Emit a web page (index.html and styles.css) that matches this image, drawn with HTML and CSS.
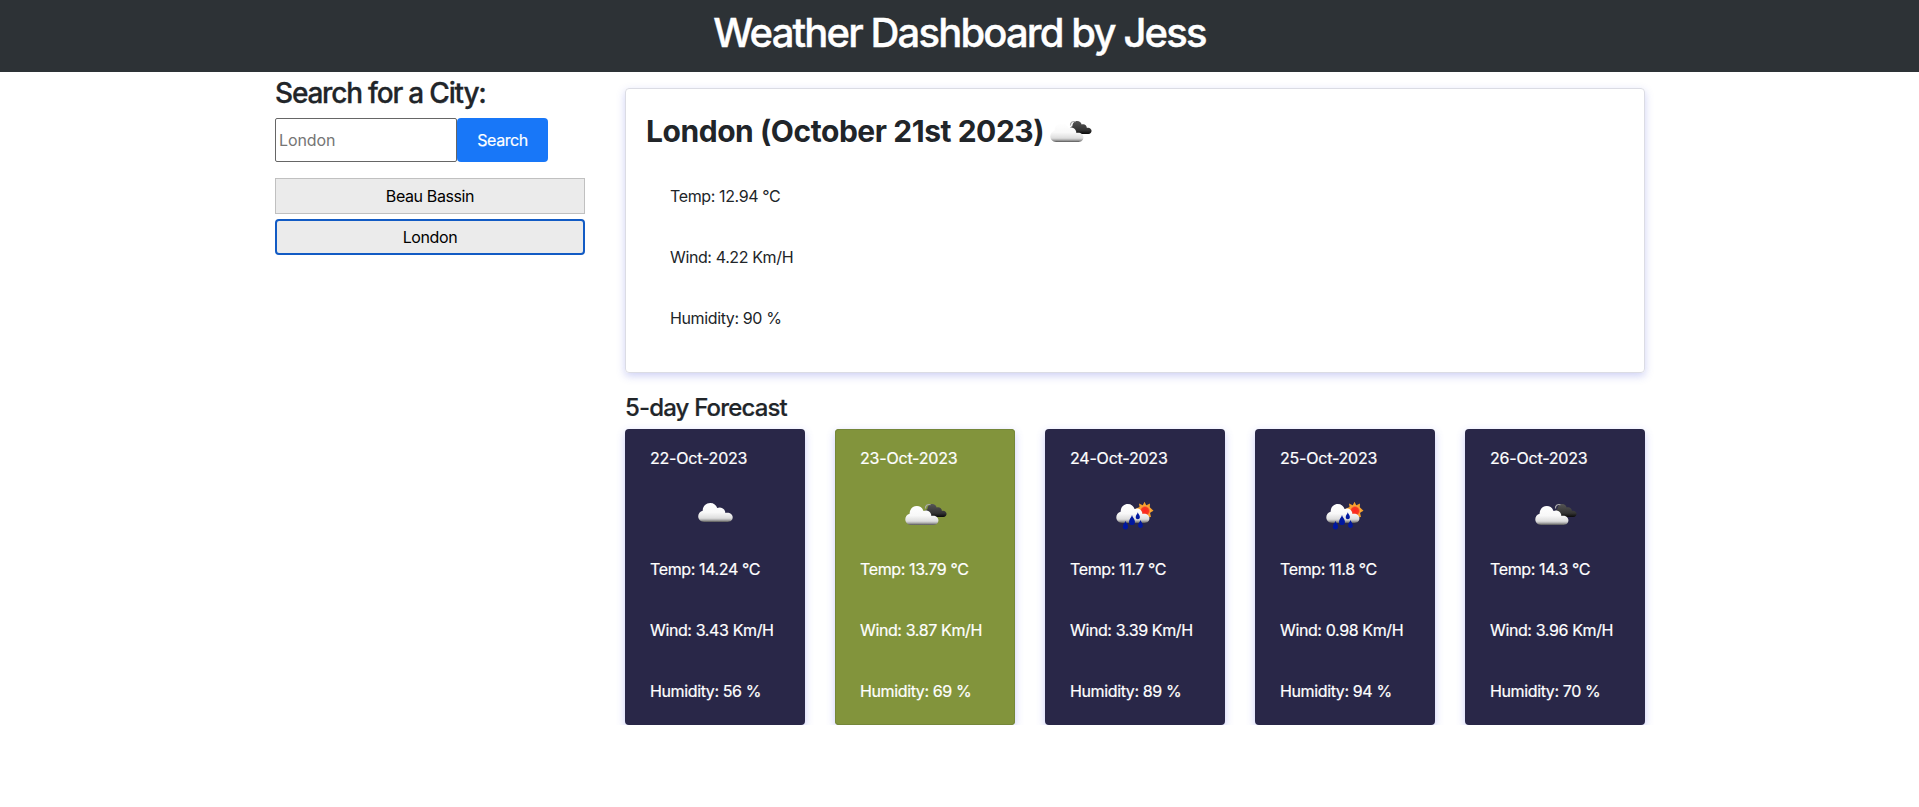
FILE: index.html
```html
<!DOCTYPE html>
<html lang="en">
<head>
<meta charset="utf-8">
<title>Weather Dashboard</title>
<link rel="stylesheet" href="styles.css">
</head>
<body>
<svg class="defs" width="0" height="0" aria-hidden="true">
  <defs>
    <linearGradient id="light" x1="0" y1="0" x2="0" y2="1">
      <stop offset="0" stop-color="#fff"/><stop offset=".5" stop-color="#f8f8f8"/><stop offset=".8" stop-color="#ddd"/><stop offset=".9" stop-color="#aaa"/><stop offset="1" stop-color="#555"/>
    </linearGradient>
    <linearGradient id="dark" x1="0" y1="0" x2="0" y2="1">
      <stop offset="0" stop-color="#555"/><stop offset=".7" stop-color="#333"/><stop offset="1" stop-color="#080808"/>
    </linearGradient>
    <radialGradient id="sun">
      <stop offset="0" stop-color="#f22"/><stop offset=".65" stop-color="#f53a20"/><stop offset="1" stop-color="#ffb347"/>
    </radialGradient>
    <path id="cloud" d="M6 19C2.600 19 0 16.500 0 13.300C0 10.500 1.800 8.400 4.500 7.700C4.500 3.200 7.700 0 12 0C15.600 0 18 2 19 5.100C22.800 3.500 27 5.800 27.200 10C31 9 34.500 11.200 34.500 14.300C34.500 17 32.400 19 29.500 19Z"/>
    <path id="drop" d="M0 0C.4 2 2.600 3.600 2.600 6C2.600 7.700 1.500 8.800 0 8.800S-2.600 7.700-2.600 6C-2.600 3.600-.4 2 0 0Z" fill="#0018a0"/>
    <symbol id="i-cloud" viewBox="0 0 60 45">
      <use href="#cloud" x="13.200" y="14" fill="url(#light)"/>
    </symbol>
    <symbol id="i-broken" viewBox="0 0 60 45">
      <g transform="translate(29.500 15) scale(.64 .69)"><use href="#cloud" fill="url(#dark)"/></g>
      <path d="M30.500 19.500C30 16.500 32.500 14.800 35.500 15.800" fill="none" stroke="#aaa" stroke-width="1.200"/>
      <g transform="translate(10.300 17) scale(.96 1)"><use href="#cloud" fill="url(#light)"/></g>
    </symbol>
    <symbol id="i-rain" viewBox="0 0 60 45">
      <path d="M39.500 12.700L41.300 16.300L45 14.500L44.800 18.200L48.500 21.800L45 23.800L46 28L42 28.500L39 31L37 28L33 27L33.500 23L31 19.500L34.500 18L34 14.500L37.800 16.200Z" fill="#f5a02c"/>
      <circle cx="40" cy="22" r="5.500" fill="url(#sun)"/>
      <g transform="translate(11.300 15) scale(.96 1)"><use href="#cloud" fill="url(#light)"/></g>
      <use href="#drop" x="20.500" y="31.800"/>
      <use href="#drop" transform="translate(27 26) scale(1.15)"/>
      <use href="#drop" transform="translate(32.800 23.300) scale(.8)"/>
      <use href="#drop" transform="translate(35.500 31) scale(.9)"/>
    </symbol>
  </defs>
</svg>
<header class="header"><h1 class="title">Weather Dashboard by Jess</h1></header>
<main class="main">
  <aside class="sidebar">
    <h2 class="search-title">Search for a City:</h2>
    <form class="search">
      <input class="search-input" type="text" placeholder="London" aria-label="City">
      <button class="search-button" type="button">Search</button>
    </form>
    <div class="history">
      <button class="city" type="button">Beau Bassin</button>
      <button class="city city-active" type="button">London</button>
    </div>
  </aside>
  <div class="content">
    <section class="today">
      <div class="today-head">
        <h2 class="today-title">London (October 21st 2023)</h2>
        <svg class="icon icon-today"><use href="#i-broken"/></svg>
      </div>
      <p class="today-line">Temp: 12.94 °C</p>
      <p class="today-line">Wind: 4.22 Km/H</p>
      <p class="today-line">Humidity: 90 %</p>
    </section>
    <h3 class="forecast-title">5-day Forecast</h3>
    <section class="forecast">
      <article class="day"><p>22-Oct-2023</p><svg class="icon"><use href="#i-cloud"/></svg><p>Temp: 14.24 °C</p><p>Wind: 3.43 Km/H</p><p>Humidity: 56 %</p></article>
      <article class="day day-hover"><p>23-Oct-2023</p><svg class="icon"><use href="#i-broken"/></svg><p>Temp: 13.79 °C</p><p>Wind: 3.87 Km/H</p><p>Humidity: 69 %</p></article>
      <article class="day"><p>24-Oct-2023</p><svg class="icon"><use href="#i-rain"/></svg><p>Temp: 11.7 °C</p><p>Wind: 3.39 Km/H</p><p>Humidity: 89 %</p></article>
      <article class="day"><p>25-Oct-2023</p><svg class="icon"><use href="#i-rain"/></svg><p>Temp: 11.8 °C</p><p>Wind: 0.98 Km/H</p><p>Humidity: 94 %</p></article>
      <article class="day"><p>26-Oct-2023</p><svg class="icon"><use href="#i-broken"/></svg><p>Temp: 14.3 °C</p><p>Wind: 3.96 Km/H</p><p>Humidity: 70 %</p></article>
    </section>
  </div>
</main>
</body>
</html>
```
FILE: styles.css
```css
* { box-sizing: border-box; }
body { margin: 0; background: #fff; color: #212529; font: 400 16px/24px Inter, "Liberation Sans", sans-serif; letter-spacing: -.38px; }
h1, h2, h3, p { margin: 0; }
.defs { display: block; height: 0; }
.header { height: 72px; padding-top: 9px; background: #2d3236; text-align: center; }
.title { color: #fff; font-size: 40px; line-height: 48px; font-weight: 500; letter-spacing: -1.85px; -webkit-text-stroke: .4px #fff; }
.main { display: flex; width: 1370px; margin-left: 275px; gap: 40px; }
.sidebar { width: 310px; padding-top: 4px; }
.search-title { font-size: 28px; line-height: 34px; font-weight: 500; letter-spacing: -1.2px; margin-bottom: 8px; -webkit-text-stroke: .3px #212529; }
.search { display: flex; height: 44px; }
.search-input { width: 182px; padding: 1px 3px; border: 1px solid #666; border-radius: 2px; font: inherit; letter-spacing: -.1px; background: #fff; }
.search-input::placeholder { color: #757575; opacity: 1; }
.search-button { width: 91px; padding: 0; border: 0; border-radius: 4px; background: #1877f8; color: #fff; font: inherit; letter-spacing: -.45px; -webkit-text-stroke: .2px #fff; }
.history { display: flex; flex-direction: column; gap: 5px; margin-top: 16px; }
.city { height: 36px; padding: 0; border: 1px solid #c0c0c0; background: #ebebeb; color: #000; font: inherit; letter-spacing: inherit; }
.city-active { border: 2px solid #125bc4; border-radius: 4px; }
.content { width: 1020px; padding-top: 16px; }
.today { height: 285px; padding: 18px 20px; border: 1px solid #dbdce4; border-radius: 4px; box-shadow: 0 3px 8px rgba(80, 90, 220, .28); }
.today-head { display: flex; height: 66px; }
.today-title { width: 394px; white-space: nowrap; font-size: 30px; line-height: 49px; font-weight: 700; letter-spacing: -.45px; }
.today-line { height: 61px; padding: 11px 24px 0; }
.icon { display: block; width: 60px; height: 45px; }
.icon-today { margin-top: -1px; }
.forecast-title { margin: 21px 0 7px; font-size: 24px; line-height: 28px; font-weight: 500; letter-spacing: -.85px; -webkit-text-stroke: .2px #212529; }
.forecast { display: flex; gap: 30px; }
.day { width: 180px; height: 296px; padding-left: 25px; border-radius: 4px; background: #292748; color: #fff; box-shadow: 0 3px 8px rgba(80, 90, 240, .3); }
.day-hover { background: #82943c; box-shadow: inset 0 0 0 1px #75873a, 0 3px 8px rgba(80, 90, 240, .3); }
.day p { height: 61px; white-space: nowrap; -webkit-text-stroke: .2px #fff; }
.day p:first-child { height: 60px; padding-top: 17px; letter-spacing: -.2px; }
.day .icon { margin: 0 0 23px 35px; }
```
